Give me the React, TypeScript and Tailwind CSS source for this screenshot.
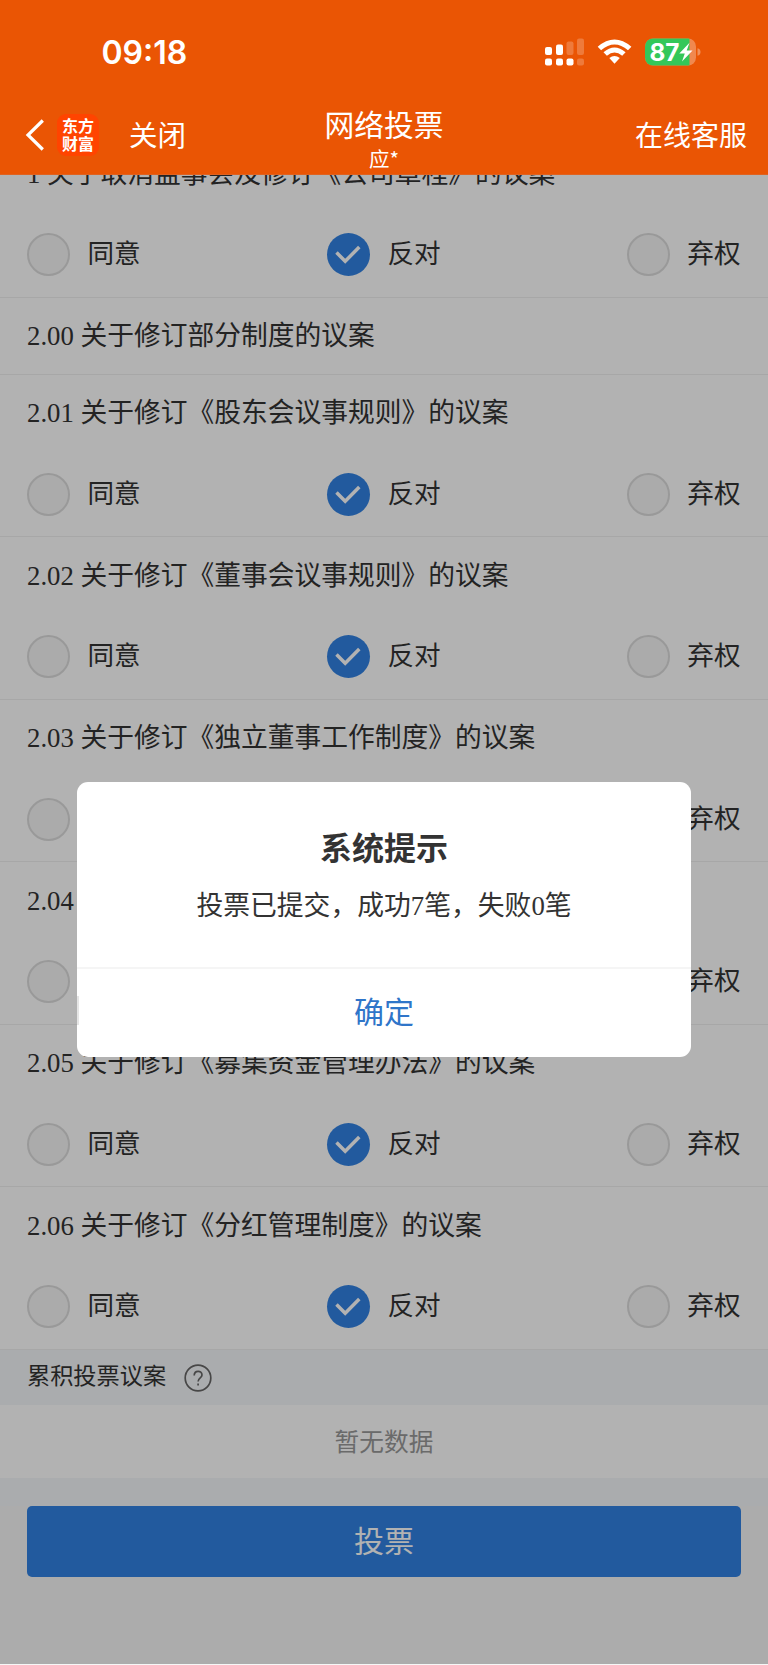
import React, { useState } from "react";

type Choice = "同意" | "反对" | "弃权";

const choices: Choice[] = ["同意", "反对", "弃权"];

const proposals = [
  { id: "1", title: "关于取消监事会及修订《公司章程》的议案", votable: true },
  { id: "2.00", title: "关于修订部分制度的议案", votable: false },
  { id: "2.01", title: "关于修订《股东会议事规则》的议案", votable: true },
  { id: "2.02", title: "关于修订《董事会议事规则》的议案", votable: true },
  { id: "2.03", title: "关于修订《独立董事工作制度》的议案", votable: true },
  { id: "2.04", title: "", votable: true },
  { id: "2.05", title: "关于修订《募集资金管理办法》的议案", votable: true },
  { id: "2.06", title: "关于修订《分红管理制度》的议案", votable: true },
];

function StatusIcons() {
  return (
    <svg width="160" height="30" viewBox="0 0 160 30" fill="#fff">
      <rect x="1" y="9" width="7" height="8" rx="2" />
      <rect x="12" y="6.500" width="7" height="10.500" rx="2" />
      <rect x="22.500" y="3.500" width="7" height="13.500" rx="2" opacity=".22" />
      <rect x="33" y="0.500" width="7" height="16.500" rx="2" opacity=".22" />
      <rect x="1" y="20.500" width="7" height="7" rx="2" />
      <rect x="12" y="20.500" width="7" height="7" rx="2" />
      <rect x="22.500" y="20.500" width="7" height="7" rx="2" />
      <rect x="33" y="20.500" width="7" height="7" rx="2" opacity=".22" />
      <path d="M53.700 8.700Q70.500-5.700 87.400 8.700L84 12.200Q70.500 .8 57.100 12.200Z" />
      <path d="M59.500 14.300Q70.500 4.900 81.600 14.300L78.200 17.700Q70.500 11.300 62.900 17.700Z" />
      <path d="M65.300 20Q70.500 15.800 75.800 20L70.500 25.700Z" />
      <clipPath id="battery">
        <rect x="101" y="0.500" width="51" height="27" rx="8" />
      </clipPath>
      <g clipPath="url(#battery)">
        <rect x="101" y="0" width="51" height="28" opacity=".3" />
        <rect x="101" y="0" width="44.500" height="28" fill="#34c759" />
      </g>
      <path d="M153.500 10.200Q156.500 11 156.500 14T153.500 17.800Z" opacity=".35" />
      <text
        x="105.500"
        y="22.500"
        fontSize="24"
        fontWeight="700"
        textLength="30"
        lengthAdjust="spacingAndGlyphs"
        className="font-['Inter',sans-serif]"
      >
        87
      </text>
      <path d="M145.500 4.800L135.300 15.400H140.800L138 23.600L148.500 12.400H142.700Z" />
    </svg>
  );
}

function Header() {
  return (
    <header className="relative z-20 h-[175px] border-b border-[#e0621f] bg-[#ea5504] text-white">
      <div className="flex h-[100px] items-start justify-between pt-[36px] pr-[64px] pl-[101.500px]">
        <span className="font-['Inter',sans-serif] text-[32px] leading-[34px] font-semibold">
          09:18
        </span>
        <div className="pt-[2px]">
          <StatusIcons />
        </div>
      </div>
      <div className="grid h-[74px] grid-cols-[1fr_auto_1fr]">
        <div className="flex h-[72px] items-center pl-[25px]">
          <svg className="-mt-[2px]" width="20" height="32" viewBox="0 0 20 32" fill="none" stroke="#fff" strokeWidth="3.200">
            <path d="M17.800 1.500L3 16L17.800 30.500" />
          </svg>
          <div className="-mt-[2px] ml-[12px] flex h-[42px] w-[42px] flex-col items-center justify-center rounded-[9px] bg-[#ff4400] pb-px font-['Noto_Sans_CJK_SC',sans-serif] text-[16px] leading-[17.500px] font-bold">
            <span>东方</span>
            <span>财富</span>
          </div>
          <span className="ml-[30px] pt-[2px] text-[28.500px]">关闭</span>
        </div>
        <div className="flex flex-col items-center font-['Noto_Sans_CJK_SC',sans-serif]">
          <span className="mt-[6px] text-[29.800px] leading-[34px]">网络投票</span>
          <span className="mt-[6px] text-[20.500px] leading-[24px]">应*</span>
        </div>
        <div className="flex h-[72px] items-center justify-end pt-[2px] pr-[21px] text-[28px]">在线客服</div>
      </div>
    </header>
  );
}

function Radio({ checked, onClick }: { checked: boolean; onClick: () => void }) {
  return (
    <button
      onClick={onClick}
      className={
        checked
          ? "flex size-[43px] items-center justify-center rounded-full bg-[#3282e2]"
          : "size-[43px] rounded-full border-2 border-[#dcdcdc] bg-[#f5f5f5]"
      }
    >
      {checked && (
        <svg className="mt-px" width="26" height="20" viewBox="0 0 26 20" fill="none" stroke="#fff" strokeWidth="3.500">
          <path d="M1.500 7.500L10.200 16.300L24.300 2" />
        </svg>
      )}
    </button>
  );
}

function Proposal({ id, title, votable }: { id: string; title: string; votable: boolean }) {
  const [selected, setSelected] = useState<Choice>("反对");
  return (
    <section className="border-b border-[#f0f0f0]">
      <h2 className="flex h-[76px] items-center pt-[2px] pl-[27px] text-[26.750px] whitespace-pre">
        {id} {title}
      </h2>
      {votable && (
        <div className="flex h-[85.500px] items-center justify-between pt-[2px] pr-[27.500px] pl-[27px]">
          {choices.map((choice) => (
            <div key={choice} className="flex items-center gap-[17.500px]">
              <Radio checked={selected === choice} onClick={() => setSelected(choice)} />
              <span className="pt-px text-[26.600px]">{choice}</span>
            </div>
          ))}
        </div>
      )}
    </section>
  );
}

function ResultDialog() {
  return (
    <div className="absolute top-[782px] left-[77px] z-30 flex h-[275px] w-[614px] flex-col overflow-hidden rounded-[11px] bg-white text-center">
      <div className="h-[185px] pt-[44px]">
        <h3 className="text-[32px] leading-[46px] font-bold">系统提示</h3>
        <p className="mt-[14px] text-[26.800px] leading-[40px]">投票已提交，成功7笔，失败0笔</p>
      </div>
      <button className="h-[90px] border-t-2 border-[#f5f5f5] pb-[1px] text-[30px] text-[#2f75c9]">
        确定
      </button>
      <span className="absolute top-[214px] left-0 h-[29px] w-[2px] bg-[#e5e5e5]" />
    </div>
  );
}

export default function App() {
  return (
    <div className="relative h-[1665px] w-[768px] overflow-hidden bg-[#f7f7f7] font-['Liberation_Serif','Noto_Sans_CJK_SC',sans-serif] text-[#333]">
      <Header />
      <main className="-mt-[40px]">
        <div className="bg-white">
          {proposals.map((item) => (
            <Proposal key={item.id} {...item} />
          ))}
        </div>
        <div className="flex h-[55.500px] items-center bg-[#f4f6f9] pb-[2px] pl-[27px] text-[23.200px]">
          <span>累积投票议案</span>
          <svg className="mt-[3px] ml-[17.500px]" width="28" height="28" viewBox="0 0 28 28" fill="none" stroke="#666" strokeWidth="1.700">
            <circle cx="14" cy="14" r="12.800" />
            <path d="M10.200 11.500C10.200 6 18 6 18 11C18 14 14.100 13.700 14.100 17.500M14.100 19.500V21.500" />
          </svg>
        </div>
        <div className="flex h-[72.500px] items-center justify-center bg-white pt-[2px] text-[24.700px] text-[#999]">
          暂无数据
        </div>
        <div className="h-[28px] bg-[#f4f6f9]" />
        <div className="px-[27px]">
          <button className="h-[71.500px] w-full rounded-[5px] bg-[#3282e2] text-[30px] text-white">
            投票
          </button>
        </div>
      </main>
      <div className="absolute inset-x-0 top-0 bottom-px z-10 bg-black/30" />
      <ResultDialog />
    </div>
  );
}
